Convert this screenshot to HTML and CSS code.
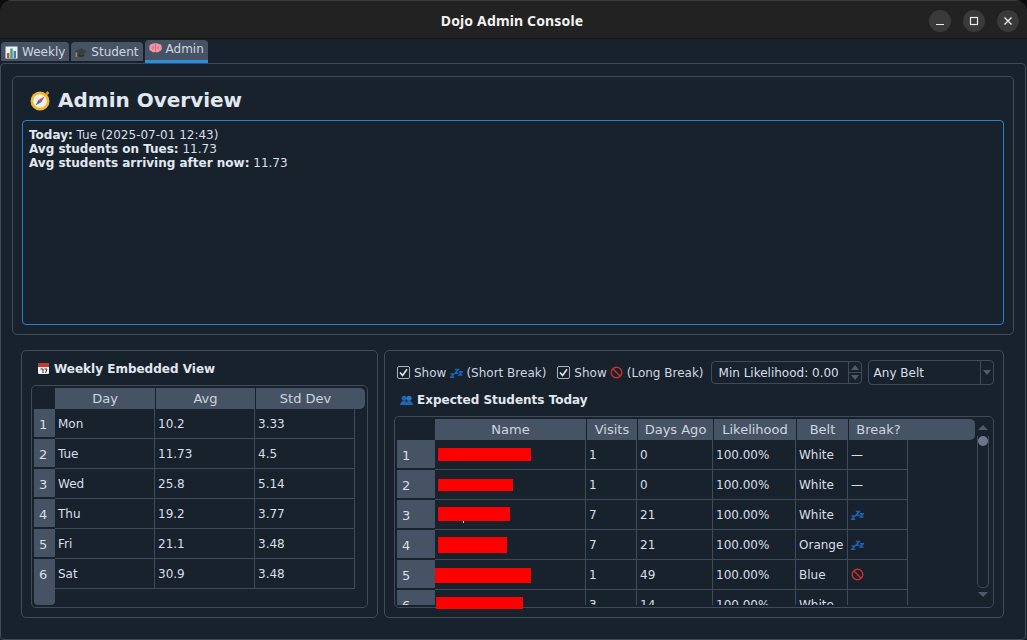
FILE: index.html
```html
<!DOCTYPE html>
<html lang="en">
<head>
  <meta charset="UTF-8" />
  <meta name="viewport" content="width=device-width, initial-scale=1.0" />
  <title>Dojo Admin Console</title>
  <link rel="stylesheet" href="styles.css">
</head>
<body>
<svg class="defs" width="0" height="0">
  <symbol id="zzz" viewBox="0 0 13 10">
    <path d="M.5 6h3.500L.8 9.200h3.500M4.800 1.500h3.500L5 5.200h3.500M9 3.800h3.200L9.200 7h3.300" fill="none" stroke="#1d62b5" stroke-width="1.500"/>
  </symbol>
  <symbol id="nope" viewBox="0 0 14 14">
    <circle cx="7" cy="7" r="5.700" fill="none" stroke="#c8302d" stroke-width="1.500"/>
    <path d="M3 3l8 8" stroke="#c8302d" stroke-width="1.500"/>
  </symbol>
  <symbol id="tick" viewBox="0 0 13 13">
    <path d="M3 6.500l2.600 3L10 3.200" fill="none" stroke="#e2e8f0" stroke-width="1.600"/>
  </symbol>
</svg>

<div class="window">
  <div class="titlebar">
    <span class="title">Dojo Admin Console</span>
    <div class="win-buttons">
      <span class="win-btn"><svg width="10" height="10" viewBox="0 0 10 10"><path d="M1 8.500h8" stroke="#eee" stroke-width="1.200"/></svg></span>
      <span class="win-btn"><svg width="10" height="10" viewBox="0 0 10 10"><rect x="1.500" y="1.500" width="7" height="7" fill="none" stroke="#eee" stroke-width="1.200"/></svg></span>
      <span class="win-btn"><svg width="10" height="10" viewBox="0 0 10 10"><path d="M1.500 1.500l7 7M8.500 1.500l-7 7" stroke="#eee" stroke-width="1.400"/></svg></span>
    </div>
  </div>

  <div class="tabs">
    <div class="tab">
      <svg class="tab-icon" width="13" height="13" viewBox="0 0 13 13"><rect x=".5" y=".5" width="12" height="12" fill="#eef1f4"/><rect x="2" y="7" width="2.400" height="5" fill="#d8433c"/><rect x="5.300" y="2.500" width="2.400" height="9.500" fill="#3aa55c"/><rect x="8.600" y="5" width="2.400" height="7" fill="#3a7bd5"/></svg>
      Weekly
    </div>
    <div class="tab">
      <svg class="tab-icon" width="12" height="13" viewBox="0 0 13 13"><path d="M0 5.500L7 2l6 3.500L7 9z" fill="#3b403c"/><path d="M3 7.500v2.800c2 1.500 5 1.500 7 0V7.500L7 9.500z" fill="#2d312e"/><path d="M1.500 6.500v5" stroke="#b58a22" stroke-width="1.500"/></svg>
      Student
    </div>
    <div class="tab active">
      <svg class="tab-icon" width="13" height="11" viewBox="0 0 13 11"><path d="M3 1C4.500-.2 6.500.5 6.500.5s2-.7 3.500.5c2 .2 3 1.800 2.500 3.300 1 1.500 0 3.500-1.700 3.700-1 1.500-3.300 1.800-4.300.7-1 1.100-3.300.8-4.300-.7C.700 7.800-.5 5.800.5 4.300 0 2.800 1 1.200 3 1z" fill="#f095a6"/><path d="M6.500 1v7.500M3 3.500l2 1.200-2 1.800M10 3.500L8 4.700l2 1.800" stroke="#cf5f78" stroke-width=".8" fill="none"/></svg>
      Admin
    </div>
  </div>

  <div class="pane">
    <section class="frame overview">
      <h1 class="overview-title">
        <svg width="22" height="22" viewBox="0 0 22 22"><circle cx="11" cy="12" r="9.500" fill="#f2b632"/><circle cx="11" cy="12" r="6.800" fill="#f4f1e8"/><path d="M17.500 3l2 2" stroke="#e09a20" stroke-width="2.500"/><path d="M15.500 7.500L12.500 13 9.500 11z" fill="#d8433c"/><path d="M6.500 16.500L9.500 11l3 2z" fill="#3a6ea5"/></svg>
        Admin Overview
      </h1>
      <div class="info-box">
        <div><b>Today:</b> Tue (2025-07-01 12:43)</div>
        <div><b>Avg students on Tues:</b> 11.73</div>
        <div><b>Avg students arriving after now:</b> 11.73</div>
      </div>
    </section>

    <div class="bottom-row">
      <section class="frame weekly">
        <h2 class="section-title">
          <svg width="13" height="13" viewBox="0 0 13 13"><rect x="1" y="1" width="11" height="11" rx="1" fill="#f1f3f4"/><rect x="1" y="1" width="11" height="4" fill="#c93a36"/><path d="M3.500 7h2.500v4M7.500 7H10L8.500 11" fill="none" stroke="#333" stroke-width="1"/></svg>
          Weekly Embedded View
        </h2>
        <div class="table-frame weekly-table">
          <div class="table-view">
            <div class="head-row">
              <span class="corner"></span>
              <span class="head-cell w100">Day</span>
              <span class="head-cell w100">Avg</span>
              <span class="head-cell w100">Std Dev</span>
              <span class="head-fill"></span>
            </div>
            <div class="row"><span class="row-head">1</span><span class="cell w100">Mon</span><span class="cell w100">10.2</span><span class="cell w100">3.33</span></div>
            <div class="row"><span class="row-head">2</span><span class="cell w100">Tue</span><span class="cell w100">11.73</span><span class="cell w100">4.5</span></div>
            <div class="row"><span class="row-head">3</span><span class="cell w100">Wed</span><span class="cell w100">25.8</span><span class="cell w100">5.14</span></div>
            <div class="row"><span class="row-head">4</span><span class="cell w100">Thu</span><span class="cell w100">19.2</span><span class="cell w100">3.77</span></div>
            <div class="row"><span class="row-head">5</span><span class="cell w100">Fri</span><span class="cell w100">21.1</span><span class="cell w100">3.48</span></div>
            <div class="row"><span class="row-head no-gap">6</span><span class="cell w100">Sat</span><span class="cell w100">30.9</span><span class="cell w100">3.48</span></div>
            <span class="row-head-end"></span>
          </div>
        </div>
      </section>

      <section class="frame students">
        <div class="controls">
          <label class="check"><span class="box"><svg width="13" height="13"><use href="#tick"/></svg></span>Show <svg class="inline-icon zzz-icon" width="13" height="10"><use href="#zzz"/></svg> (Short Break)</label>
          <label class="check second"><span class="box"><svg width="13" height="13"><use href="#tick"/></svg></span>Show <svg class="inline-icon" width="13" height="13"><use href="#nope"/></svg> (Long Break)</label>
          <div class="spin">
            <span class="spin-text">Min Likelihood: 0.00</span>
            <span class="spin-arrows"><i class="arrow up"></i><i class="arrow down"></i></span>
          </div>
          <div class="combo">
            <span class="combo-text">Any Belt</span>
            <span class="combo-arrow"><i class="arrow down"></i></span>
          </div>
        </div>
        <h2 class="section-title students-title">
          <svg width="13" height="11" viewBox="0 0 14 12"><circle cx="4.500" cy="3.500" r="2.800" fill="#1f66b8"/><circle cx="9.800" cy="3.500" r="2.800" fill="#2a75c9"/><path d="M0 11c0-6 8.500-6 8.500 0zM6 11c0-6 8-6 8 0z" fill="#1f66b8"/></svg>
          Expected Students Today
        </h2>
        <div class="table-frame students-table">
          <div class="table-view">
            <div class="head-row">
              <span class="corner"></span>
              <span class="head-cell c-name">Name</span>
              <span class="head-cell c-visits">Visits</span>
              <span class="head-cell c-days">Days Ago</span>
              <span class="head-cell c-like">Likelihood</span>
              <span class="head-cell c-belt">Belt</span>
              <span class="head-cell c-break">Break?</span>
              <span class="head-fill"></span>
            </div>
            <div class="row"><span class="row-head">1</span><span class="cell c-name"></span><span class="cell c-visits">1</span><span class="cell c-days">0</span><span class="cell c-like">100.00%</span><span class="cell c-belt">White</span><span class="cell c-break">—</span></div>
            <div class="row"><span class="row-head">2</span><span class="cell c-name"></span><span class="cell c-visits">1</span><span class="cell c-days">0</span><span class="cell c-like">100.00%</span><span class="cell c-belt">White</span><span class="cell c-break">—</span></div>
            <div class="row"><span class="row-head">3</span><span class="cell c-name"></span><span class="cell c-visits">7</span><span class="cell c-days">21</span><span class="cell c-like">100.00%</span><span class="cell c-belt">White</span><span class="cell c-break"><svg width="13" height="10"><use href="#zzz"/></svg></span></div>
            <div class="row"><span class="row-head">4</span><span class="cell c-name"></span><span class="cell c-visits">7</span><span class="cell c-days">21</span><span class="cell c-like">100.00%</span><span class="cell c-belt">Orange</span><span class="cell c-break"><svg width="13" height="10"><use href="#zzz"/></svg></span></div>
            <div class="row"><span class="row-head">5</span><span class="cell c-name"></span><span class="cell c-visits">1</span><span class="cell c-days">49</span><span class="cell c-like">100.00%</span><span class="cell c-belt">Blue</span><span class="cell c-break"><svg width="13" height="13"><use href="#nope"/></svg></span></div>
            <div class="row"><span class="row-head">6</span><span class="cell c-name"></span><span class="cell c-visits">3</span><span class="cell c-days">14</span><span class="cell c-like">100.00%</span><span class="cell c-belt">White</span><span class="cell c-break">—</span></div>
          </div>
          <div class="scrollbar">
            <i class="arrow up"></i>
            <div class="track"><div class="handle"></div></div>
            <i class="arrow down"></i>
          </div>
        </div>
        <span class="redact r1"></span>
        <span class="redact r2"></span>
        <span class="redact r3"></span>
        <span class="redact r4"></span>
        <span class="redact r5"></span>
        <span class="redact r6"></span>
      </section>
    </div>
  </div>
</div>
</body>
</html>
```

FILE: styles.css
```css
* {
  box-sizing: border-box;
}
body {
  margin: 0;
  width: 1027px;
  height: 640px;
  overflow: hidden;
  background: #0c0c0c;
  color: #d9dfe8;
  font-family: "DejaVu Sans", sans-serif;
  font-size: 12px;
}
.defs {
  position: absolute;
}
.window {
  height: 640px;
  display: flex;
  flex-direction: column;
  background: #18222d;
  border-radius: 12px 12px 0 0;
  overflow: hidden;
}

/* title bar */
.titlebar {
  height: 39px;
  flex: none;
  display: flex;
  align-items: center;
  justify-content: center;
  padding-top: 2px;
  background: #222222;
  border-top: 1px solid #3b3b3b;
  border-bottom: 1px solid #151515;
  position: relative;
}
.title {
  margin-right: 3px;
  color: #f2f2f2;
  font-family: "Noto Sans", sans-serif;
  font-weight: bold;
  font-size: 14px;
  letter-spacing: .15px;
}
.win-buttons {
  position: absolute;
  right: 8px;
  top: 9px;
  display: flex;
  gap: 12px;
}
.win-btn {
  width: 22px;
  height: 22px;
  border-radius: 50%;
  background: #3a3a3a;
  display: flex;
  align-items: center;
  justify-content: center;
}

/* tabs */
.tabs {
  height: 24px;
  flex: none;
  display: flex;
  gap: 2px;
  padding-left: 1px;
}
.tab {
  height: 19px;
  margin-top: 3px;
  padding: 1px 4px 0;
  display: flex;
  align-items: center;
  gap: 4px;
  background: #465364;
  border-radius: 4px 4px 0 0;
  color: #cfd6e0;
  line-height: 18px;
}
.tab.active {
  height: 23px;
  margin-top: 1px;
  padding: 0 4px 3px;
  border-bottom: 3px solid #2a8fe0;
}
.tab-icon {
  flex: none;
}

/* frames */
.pane {
  flex: 1;
  border: 1px solid #3f4b5b;
  border-radius: 4px;
  margin-right: 1px;
  padding: 12px 11px 0;
}
.frame {
  border: 1px solid #3f4b5b;
  border-radius: 5px;
}
.overview {
  height: 259px;
  padding: 11px 9px 9px;
  display: flex;
  flex-direction: column;
}
.overview-title {
  margin: 0 0 8px 6px;
  height: 24px;
  display: flex;
  align-items: center;
  gap: 7px;
  font-size: 20px;
  font-weight: bold;
  color: #e2e8f0;
}
.overview-title svg {
  margin-left: 1px;
}
.info-box {
  flex: 1;
  border: 1px solid #2a7fd0;
  border-radius: 4px;
  padding: 7px 6px;
  line-height: 14px;
}
.info-box b {
  color: #e2e8f0;
}
.bottom-row {
  display: flex;
  gap: 6px;
  margin: 15px 9px 0 9px;
}
.weekly {
  width: 357px;
  height: 268px;
  padding: 9px 9px 0;
}
.students {
  width: 620px;
  height: 268px;
  padding: 9px 9px 0;
  position: relative;
}
.section-title {
  margin: 0 0 8px 5px;
  height: 17px;
  display: flex;
  align-items: center;
  gap: 4px;
  font-size: 12px;
  font-weight: bold;
  color: #e2e8f0;
}
.weekly .section-title svg,
.students-title svg {
  margin-left: 1px;
}
.students-title {
  padding-top: 1px;
}

/* tables */
.table-frame {
  border: 1px solid #3f4b5b;
  border-radius: 5px;
  padding: 2px;
  display: flex;
}
.weekly-table {
  height: 223px;
}
.students-table {
  height: 192px;
  gap: 2px;
}
.table-view {
  flex: 1;
  display: flex;
  flex-direction: column;
  overflow: hidden;
}
.weekly-table .table-view {
  height: 217px;
}
.students-table .table-view {
  height: 186px;
}
.head-row {
  height: 21px;
  flex: none;
  display: flex;
}
.corner {
  width: 21px;
  flex: none;
}
.students-table .corner,
.students-table .row-head {
  width: 38px;
}
.head-cell {
  height: 21px;
  line-height: 21px;
  text-align: center;
  font-size: 13px;
  color: #cdd5df;
  background: #465364;
  border-left: 1px solid #18222d;
}
.corner + .head-cell {
  border-left: 0;
}
.head-fill {
  flex: 1;
  background: #465364;
  border-radius: 0 5px 5px 0;
}
.row {
  height: 30px;
  flex: none;
  display: flex;
}
.row-head {
  width: 21px;
  flex: none;
  padding: 6px 0 0 5px;
  background: #465364;
  border-bottom: 2px solid #18222d;
  font-size: 13px;
  line-height: 20px;
  color: #d9dfe8;
}
.row-head.no-gap {
  border-bottom: 0;
}
.row-head-end {
  width: 21px;
  flex: 1;
  background: #465364;
  border-radius: 0 0 4px 4px;
}
.cell {
  flex: none;
  padding: 0 0 0 3px;
  display: flex;
  align-items: center;
  border-right: 1px solid #3f4b5b;
  border-bottom: 1px solid #3f4b5b;
}
.w100 {
  width: 100px;
  flex: none;
}
.c-name {
  width: 151px;
  flex: none;
}
.c-visits {
  width: 51px;
  flex: none;
}
.c-days {
  width: 76px;
  flex: none;
}
.c-like {
  width: 83px;
  flex: none;
}
.c-belt {
  width: 52px;
  flex: none;
}
.c-break {
  width: 60px;
  flex: none;
}

/* controls */
.controls {
  height: 25px;
  margin-bottom: 6px;
  margin-left: 3px;
  display: flex;
  align-items: center;
}
.check {
  display: flex;
  align-items: center;
  gap: 3px;
  color: #cfd6e0;
  white-space: nowrap;
}
.check.second {
  margin-left: 11px;
}
.box {
  width: 13px;
  height: 13px;
  margin-right: 1px;
  border: 1px solid #aab4c0;
  border-radius: 2px;
  display: flex;
  align-items: center;
  justify-content: center;
}
.box svg {
  flex: none;
}
.inline-icon {
  flex: none;
  margin-right: 1px;
}
.zzz-icon {
  margin: 0 0 0 1px;
}
.spin {
  width: 151px;
  height: 23px;
  margin-left: 7px;
  display: flex;
  border: 1px solid #3f4b5b;
  border-radius: 4px;
}
.spin-text {
  flex: 1;
  padding-left: 7px;
  line-height: 22px;
}
.spin-arrows {
  width: 13px;
  display: flex;
  flex-direction: column;
  align-items: center;
  justify-content: space-around;
  border-left: 1px solid #3f4b5b;
  background: linear-gradient(#3f4b5b, #3f4b5b) center / 100% 1px no-repeat;
}
.combo {
  width: 126px;
  height: 25px;
  margin-left: 6px;
  display: flex;
  border: 1px solid #3f4b5b;
  border-radius: 4px;
}
.combo-text {
  flex: 1;
  padding-left: 5px;
  line-height: 24px;
}
.combo-arrow {
  width: 13px;
  display: flex;
  align-items: center;
  justify-content: center;
  border-left: 1px solid #3f4b5b;
}
.arrow {
  display: block;
  width: 0;
  height: 0;
  border-left: 4px solid transparent;
  border-right: 4px solid transparent;
}
.arrow.up {
  border-bottom: 5px solid #4f5b6a;
}
.arrow.down {
  border-top: 5px solid #4f5b6a;
}

/* scrollbar */
.scrollbar {
  width: 12px;
  flex: none;
  display: flex;
  flex-direction: column;
  align-items: center;
  padding-top: 6px;
  margin-right: 2px;
}
.scrollbar .arrow {
  border-left-width: 5px;
  border-right-width: 5px;
  flex: none;
}
.track {
  width: 12px;
  height: 152px;
  flex: none;
  margin: 6px 0 4px;
  border: 1px solid #3f4b5b;
  border-top: 0;
  border-radius: 0 0 5px 5px;
}
.handle {
  height: 10px;
  border-radius: 5px;
  background: #6a7888;
}

/* names hidden in the capture */
.redact {
  position: absolute;
  background: #ff0000;
}
.r1 { left: 53px; top: 97px; width: 93px; height: 13px; }
.r2 { left: 53px; top: 128px; width: 75px; height: 12px; }
.r3 { left: 53px; top: 156px; width: 72px; height: 14px; }
.r4 { left: 53px; top: 186px; width: 69px; height: 16px; }
.r5 { left: 50px; top: 217px; width: 96px; height: 15px; }
.r6 { left: 51px; top: 246px; width: 87px; height: 12px; }
.r3::after {
  content: "";
  position: absolute;
  left: 25px;
  top: 14px;
  width: 1px;
  height: 2px;
  background: #cfd6e0;
}
```
